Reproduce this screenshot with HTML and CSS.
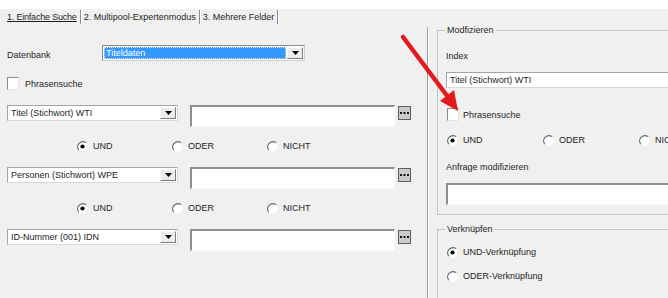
FILE: index.html
```html
<!DOCTYPE html>
<html lang="de">
<head>
  <meta charset="UTF-8">
  <title>Einfache Suche</title>
  <link rel="stylesheet" href="styles.css">
</head>
<body>
  <div class="topstrip"></div>
  <nav class="tabs">
    <span class="tab active">1. Einfache Suche</span>
    <span class="tab">2. Multipool-Expertenmodus</span>
    <span class="tab">3. Mehrere Felder</span>
  </nav>

  <main class="panes">
    <!-- linke Seite: Suchfelder -->
    <section class="query">
      <div class="db-row">
        <span class="db-label">Datenbank</span>
        <div class="combo combo-db">
          <span class="combo-text">Titeldaten</span>
          <span class="drop-btn"><svg width="7" height="4" viewBox="0 0 7 4"><polygon points="0,0 7,0 3.5,4" fill="#000"/></svg></span>
        </div>
      </div>

      <label class="check"><span class="box"></span>Phrasensuche</label>

      <div class="field-row">
        <div class="combo combo-index">
          <span class="combo-text">Titel (Stichwort) WTI</span>
          <span class="drop-btn"><svg width="7" height="4" viewBox="0 0 7 4"><polygon points="0,0 7,0 3.5,4" fill="#000"/></svg></span>
        </div>
        <div class="text-field"></div>
        <span class="dots-btn"><svg width="9" height="2" viewBox="0 0 9 2"><rect x="0" y="0" width="2" height="2"/><rect x="3.5" y="0" width="2" height="2"/><rect x="7" y="0" width="2" height="2"/></svg></span>
      </div>

      <div class="radio-row">
        <span class="opt"><svg class="radio" width="11" height="11" viewBox="0 0 12 12"><circle cx="6" cy="6" r="5.5" fill="#fff"/><path d="M2 10 A5.7 5.7 0 0 1 10 2" fill="none" stroke="#777" stroke-width="1.3"/><circle cx="6" cy="6" r="2.3" fill="#000"/></svg>UND</span>
        <span class="opt"><svg class="radio" width="11" height="11" viewBox="0 0 12 12"><circle cx="6" cy="6" r="5.5" fill="#fff"/><path d="M2 10 A5.7 5.7 0 0 1 10 2" fill="none" stroke="#777" stroke-width="1.3"/></svg>ODER</span>
        <span class="opt"><svg class="radio" width="11" height="11" viewBox="0 0 12 12"><circle cx="6" cy="6" r="5.5" fill="#fff"/><path d="M2 10 A5.7 5.7 0 0 1 10 2" fill="none" stroke="#777" stroke-width="1.3"/></svg>NICHT</span>
      </div>

      <div class="field-row">
        <div class="combo combo-index">
          <span class="combo-text">Personen (Stichwort) WPE</span>
          <span class="drop-btn"><svg width="7" height="4" viewBox="0 0 7 4"><polygon points="0,0 7,0 3.5,4" fill="#000"/></svg></span>
        </div>
        <div class="text-field"></div>
        <span class="dots-btn"><svg width="9" height="2" viewBox="0 0 9 2"><rect x="0" y="0" width="2" height="2"/><rect x="3.5" y="0" width="2" height="2"/><rect x="7" y="0" width="2" height="2"/></svg></span>
      </div>

      <div class="radio-row">
        <span class="opt"><svg class="radio" width="11" height="11" viewBox="0 0 12 12"><circle cx="6" cy="6" r="5.5" fill="#fff"/><path d="M2 10 A5.7 5.7 0 0 1 10 2" fill="none" stroke="#777" stroke-width="1.3"/><circle cx="6" cy="6" r="2.3" fill="#000"/></svg>UND</span>
        <span class="opt"><svg class="radio" width="11" height="11" viewBox="0 0 12 12"><circle cx="6" cy="6" r="5.5" fill="#fff"/><path d="M2 10 A5.7 5.7 0 0 1 10 2" fill="none" stroke="#777" stroke-width="1.3"/></svg>ODER</span>
        <span class="opt"><svg class="radio" width="11" height="11" viewBox="0 0 12 12"><circle cx="6" cy="6" r="5.5" fill="#fff"/><path d="M2 10 A5.7 5.7 0 0 1 10 2" fill="none" stroke="#777" stroke-width="1.3"/></svg>NICHT</span>
      </div>

      <div class="field-row">
        <div class="combo combo-index">
          <span class="combo-text">ID-Nummer (001) IDN</span>
          <span class="drop-btn"><svg width="7" height="4" viewBox="0 0 7 4"><polygon points="0,0 7,0 3.5,4" fill="#000"/></svg></span>
        </div>
        <div class="text-field"></div>
        <span class="dots-btn"><svg width="9" height="2" viewBox="0 0 9 2"><rect x="0" y="0" width="2" height="2"/><rect x="3.5" y="0" width="2" height="2"/><rect x="7" y="0" width="2" height="2"/></svg></span>
      </div>
    </section>

    <div class="divider"></div>

    <!-- rechte Seite: Modifizieren / Verknüpfen -->
    <aside class="side">
      <fieldset class="group group-modify">
        <legend>Modfizieren</legend>
        <div class="side-label label-index">Index</div>
        <div class="combo combo-side"><span class="combo-text">Titel (Stichwort) WTI</span></div>
        <label class="check check-side"><span class="box"></span>Phrasensuche</label>
        <div class="radio-row side-radios">
          <span class="opt"><svg class="radio" width="11" height="11" viewBox="0 0 12 12"><circle cx="6" cy="6" r="5.5" fill="#fff"/><path d="M2 10 A5.7 5.7 0 0 1 10 2" fill="none" stroke="#777" stroke-width="1.3"/><circle cx="6" cy="6" r="2.3" fill="#000"/></svg>UND</span>
          <span class="opt"><svg class="radio" width="11" height="11" viewBox="0 0 12 12"><circle cx="6" cy="6" r="5.5" fill="#fff"/><path d="M2 10 A5.7 5.7 0 0 1 10 2" fill="none" stroke="#777" stroke-width="1.3"/></svg>ODER</span>
          <span class="opt"><svg class="radio" width="11" height="11" viewBox="0 0 12 12"><circle cx="6" cy="6" r="5.5" fill="#fff"/><path d="M2 10 A5.7 5.7 0 0 1 10 2" fill="none" stroke="#777" stroke-width="1.3"/></svg>NICHT</span>
        </div>
        <div class="side-label label-query">Anfrage modifizieren</div>
        <div class="text-field text-side"></div>
      </fieldset>

      <fieldset class="group group-link">
        <legend>Verknüpfen</legend>
        <div class="opt link-opt first"><svg class="radio" width="11" height="11" viewBox="0 0 12 12"><circle cx="6" cy="6" r="5.5" fill="#fff"/><path d="M2 10 A5.7 5.7 0 0 1 10 2" fill="none" stroke="#777" stroke-width="1.3"/><circle cx="6" cy="6" r="2.3" fill="#000"/></svg>UND-Verknüpfung</div>
        <div class="opt link-opt"><svg class="radio" width="11" height="11" viewBox="0 0 12 12"><circle cx="6" cy="6" r="5.5" fill="#fff"/><path d="M2 10 A5.7 5.7 0 0 1 10 2" fill="none" stroke="#777" stroke-width="1.3"/></svg>ODER-Verknüpfung</div>
      </fieldset>
    </aside>
  </main>

  <!-- roter Hinweispfeil -->
  <svg class="arrow" width="668" height="298" viewBox="0 0 668 298">
    <line x1="403" y1="37" x2="448" y2="97" stroke="#e3191c" stroke-width="4.5" stroke-linecap="round"/>
    <polygon points="458,111 440,101 454,90" fill="#e3191c"/>
  </svg>
</body>
</html>
```

FILE: styles.css
```css
body {
  margin: 0;
  width: 668px;
  height: 298px;
  overflow: hidden;
  background-color: #f0f0f0;
  font-family: "Liberation Sans", Arial, sans-serif;
  font-size: 9px;
  color: #1e1e1e;
  position: relative;
}
.topstrip {
  height: 9px;
  background: #fff;
}

/* Reiter */
.tabs {
  display: flex;
  height: 16px;
  align-items: center;
}
.tab {
  padding: 0 3px;
  line-height: 14px;
  border-right: 1px solid #8c8c8c;
  box-shadow: 1px 0 0 #fff;
}
.tab:first-child {
  padding-left: 7px;
  letter-spacing: -0.2px;
}
.tab.active {
  text-decoration: underline;
}

.panes {
  display: flex;
  height: 273px;
}

/* linke Seite */
.query {
  width: 427px;
  padding: 20px 0 0 7px;
  box-sizing: border-box;
}
.db-row {
  display: flex;
  align-items: center;
}
.db-label {
  width: 95px;
  padding-top: 3px;
}
.combo {
  display: flex;
  height: 16px;
  box-sizing: border-box;
  background: #fff;
  border: 1px solid #a5a5a5;
  border-right-color: #d8d8d8;
  border-bottom-color: #d8d8d8;
}
.combo-text {
  flex: 1;
  padding-left: 3px;
  line-height: 14px;
  white-space: nowrap;
  overflow: hidden;
}
.combo-db {
  width: 203px;
  border-color: #8a8a8a #cfcfcf #cfcfcf #8a8a8a;
}
.combo-db .combo-text {
  background: #3399ff;
  color: #fff;
  margin: 1px 0 1px 1px;
  line-height: 12px;
  padding-left: 2px;
  outline: 1px dotted #f0e6c8;
  outline-offset: -1px;
}
.drop-btn {
  width: 16px;
  margin: 1px;
  box-sizing: border-box;
  background: #ececec;
  border: 1px solid;
  border-color: #fafafa #7c7c7c #7c7c7c #fafafa;
  display: flex;
  align-items: center;
  justify-content: center;
}
.combo-index {
  width: 171px;
}

.check {
  display: flex;
  align-items: center;
  gap: 6px;
  height: 13px;
  margin-top: 16px;
}
.box {
  width: 12px;
  height: 13px;
  box-sizing: border-box;
  background: #fff;
  border: 1px solid;
  border-color: #8c8c8c #e2e2e2 #e2e2e2 #8c8c8c;
}

.field-row {
  display: flex;
  align-items: flex-start;
  margin-top: 15px;
  height: 22px;
}
.text-field {
  width: 205px;
  height: 22px;
  margin-left: 12px;
  box-sizing: border-box;
  background: #fff;
  border-style: solid;
  border-width: 2px 1px 1px 2px;
  border-color: #8e8e8e #fbfbfb #fbfbfb #8e8e8e;
}
.dots-btn {
  width: 13px;
  height: 14px;
  margin: 1px 0 0 3px;
  box-sizing: border-box;
  background: #cacaca;
  border: 1px solid #5e5e5e;
  display: flex;
  align-items: center;
  justify-content: center;
  fill: #111;
}

.radio-row {
  display: flex;
  height: 12px;
  align-items: center;
  margin-top: 13px;
  padding-left: 70px;
}
.opt {
  display: flex;
  align-items: center;
  gap: 5px;
  width: 95px;
  white-space: nowrap;
}
.radio {
  flex: none;
}

/* Trennlinie */
.divider {
  width: 0;
  margin-top: 2px;
  border-left: 1px solid #9a9a9a;
  border-right: 1px solid #fff;
}

/* rechte Seite */
.side {
  flex: 1;
  overflow: hidden;
  padding-left: 8px;
}
.group {
  width: 300px;
  margin: 0;
  padding: 0 0 0 8px;
  border: 1px solid #c4c4c4;
  box-sizing: border-box;
}
.group legend {
  padding: 0 2px;
  line-height: 11px;
  margin-left: -1px;
}
.group-modify {
  padding-bottom: 9px;
}
.side-label {
  line-height: 11px;
}
.label-index {
  margin-top: 15px;
}
.combo-side {
  width: 260px;
  margin-top: 10px;
}
.check-side {
  margin-top: 20px;
  gap: 4px;
  padding-left: 1px;
}
.side-radios {
  padding-left: 1px;
}
.side-radios .opt {
  width: 96px;
}
.label-query {
  margin-top: 16px;
}
.text-side {
  width: 260px;
  margin: 10px 0 0 0;
}

.group-link {
  margin-top: 9px;
  height: 90px;
}
.link-opt {
  width: auto;
  height: 12px;
  padding-left: 1px;
  margin-top: 12px;
}
.link-opt.first {
  margin-top: 11px;
}

/* Pfeil */
.arrow {
  position: absolute;
  left: 0;
  top: 0;
  pointer-events: none;
}
```
